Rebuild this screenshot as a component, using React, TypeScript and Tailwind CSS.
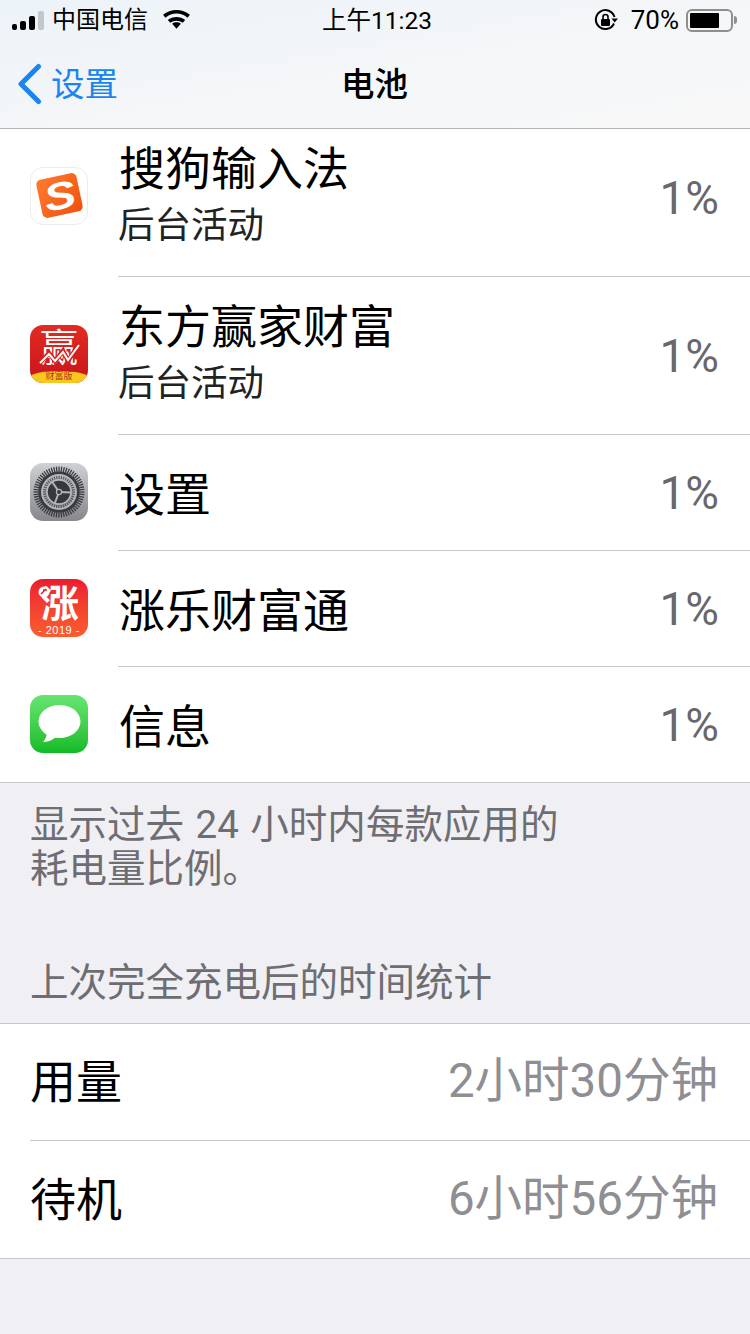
import React from "react";

const cjk = "font-['Roboto','Noto_Sans_CJK_SC',sans-serif]";

const SogouIcon = () => (
  <div className="w-[58px] h-[58px] rounded-[13px] bg-white border border-[#ececec] flex items-center justify-center">
    <div className="w-[41px] h-[39px] rounded-[5px] -rotate-[12deg] bg-gradient-to-br from-[#ff7a2c] to-[#f0500f] flex items-center justify-center">
      <span className="text-white text-[38px] leading-none font-black italic font-['Liberation_Sans',sans-serif] scale-x-125">S</span>
    </div>
  </div>
);

const EastMoneyIcon = () => (
  <div className="w-[58px] h-[58px] rounded-[13px] overflow-hidden bg-gradient-to-b from-[#e22a22] to-[#c8141a] flex flex-col items-center relative">
    <span className="text-white text-[38px] leading-[42px] mt-[2px]">赢</span>
    <svg viewBox="0 0 58 58" width="58" height="58" className="absolute inset-0">
      <path d="M9 39L19 28L25 36L33 26L38 36L49 19" fill="none" stroke="#d51f1f" strokeWidth="4.5" />
      <path d="M10 38L19 29L25 36L33 27L38 35L49 20" fill="none" stroke="#fff" strokeWidth="2" />
    </svg>
    <div className="absolute bottom-0 left-0 right-0 h-[12px] bg-[#f9c81e] rounded-t-[50%] flex items-center justify-center">
      <span className="text-[#b5301a] text-[9px] leading-none">财富版</span>
    </div>
  </div>
);

const SettingsIcon = () => {
  const teeth = Array.from({ length: 60 }, (_, i) => i * 6);
  const inner = Array.from({ length: 40 }, (_, i) => i * 9);
  return (
    <div className="w-[58px] h-[58px] rounded-[13px] overflow-hidden bg-gradient-to-b from-[#d0d1d4] to-[#87888c]">
      <svg viewBox="0 0 58 58" width="58" height="58">
        {teeth.map((a) => (
          <rect key={a} x="28.4" y="3.5" width="1.3" height="5" fill="#3a3b3f" transform={`rotate(${a} 29 29)`} />
        ))}
        <circle cx="29" cy="29" r="19.3" fill="none" stroke="#3a3b3f" strokeWidth="3" />
        <circle cx="29" cy="29" r="16.6" fill="none" stroke="#b4b5b8" strokeWidth="2.2" />
        {inner.map((a) => (
          <rect key={a} x="28.5" y="13" width="1.2" height="3" fill="#55565a" transform={`rotate(${a} 29 29)`} />
        ))}
        <circle cx="29" cy="29" r="12" fill="#37383c" stroke="#b4b5b8" strokeWidth="1.6" />
        <g stroke="#b4b5b8" strokeWidth="2" fill="none">
          <path d="M29 29L22 18.5" />
          <path d="M29 29L41 29.5" />
          <path d="M29 29L24.5 41" />
        </g>
        <circle cx="29" cy="29" r="2.6" fill="#37383c" stroke="#b4b5b8" strokeWidth="1.2" />
      </svg>
    </div>
  );
};

const ZhangleIcon = () => (
  <div className="w-[58px] h-[58px] rounded-[13px] overflow-hidden bg-gradient-to-b from-[#ec1a30] to-[#fb5c30] flex flex-col items-center relative">
    <span className="text-white text-[38px] leading-[40px] font-bold mt-[5px] ml-[2px]">涨</span>
    <span className="text-white text-[11px] leading-none font-['Liberation_Sans',sans-serif] mt-[1px] tracking-[0.5px]">- 2019 -</span>
    <svg viewBox="0 0 58 58" width="58" height="58" className="absolute inset-0">
      <circle cx="14" cy="13" r="5.5" fill="#fff" />
      <path d="M11 15L16 10M13 11H17" stroke="#e8202f" strokeWidth="1.5" fill="none" />
    </svg>
  </div>
);

const MessagesIcon = () => (
  <div className="w-[58px] h-[58px] rounded-[13px] overflow-hidden bg-gradient-to-b from-[#66e571] to-[#0cbb25]">
    <svg viewBox="0 0 58 58" width="58" height="58">
      <ellipse cx="29.5" cy="26.5" rx="21" ry="16.5" fill="#fff" />
      <path d="M17 36C17 41 15 45 13 47C19 47 24 44 27 41Z" fill="#fff" />
    </svg>
  </div>
);

const apps = [
  { icon: <SogouIcon />, name: "搜狗输入法", sub: "后台活动", h: "h-[158px] -mt-[10px]", iconPad: "pb-[5px]" },
  { icon: <EastMoneyIcon />, name: "东方赢家财富", sub: "后台活动", h: "h-[158px]", iconPad: "pb-[5px]" },
  { icon: <SettingsIcon />, name: "设置", h: "h-[116px]", iconPad: "pb-[3px]" },
  { icon: <ZhangleIcon />, name: "涨乐财富通", h: "h-[116px]", iconPad: "pb-[3px]" },
  { icon: <MessagesIcon />, name: "信息", h: "h-[115px]", iconPad: "pb-[1px]" },
];

const StatusBar = () => (
  <div className="h-[40px] relative flex items-center justify-between pl-[12px] pr-[11px] text-black">
    <div className="flex items-center">
      <div className="flex items-end gap-[3px] h-[19px]">
        <div className="w-[5px] h-[6px] bg-black rounded-[2px]" />
        <div className="w-[6px] h-[9px] bg-black rounded-[2px]" />
        <div className="w-[6px] h-[14px] bg-black rounded-[2px]" />
        <div className="w-[6px] h-[19px] bg-[#c4c8cc] rounded-[2px]" />
      </div>
      <span className="text-[24px] leading-none ml-[8px]">中国电信</span>
      <svg viewBox="0 0 28 20" width="29" height="21" className="ml-[14px] mb-[2px]">
        <path d="M14 19L9.8 14.2C12.2 12.3 15.8 12.3 18.2 14.2Z" fill="#000" />
        <path d="M1 5.5C8.3 -0.6 19.7 -0.6 27 5.5L24.6 8.2C18.4 3 9.6 3 3.4 8.2Z" fill="#000" />
        <path d="M5.6 10.6C10.4 6.5 17.6 6.5 22.4 10.6L20 13.2C16.6 10.4 11.4 10.4 8 13.2Z" fill="#000" />
      </svg>
    </div>
    <span className="absolute left-[322px] top-[8px] text-[24.5px] leading-[26px]">上午11:23</span>
    <div className="flex items-center">
      <svg viewBox="0 0 24 24" width="24" height="24" className="mr-[13px]">
        <path d="M20 15.5A9.5 9.5 0 1 1 20.5 9" fill="none" stroke="#000" strokeWidth="2" />
        <path d="M17.5 10.5L24 10.5L20.7 14.5Z" fill="#000" />
        <rect x="7" y="11" width="9" height="7" rx="1" fill="#000" />
        <path d="M9 11V9a2.5 2.5 0 0 1 5 0v2" fill="none" stroke="#000" strokeWidth="1.6" />
      </svg>
      <span className="text-[26px] leading-none">70%</span>
      <div className="w-[47px] h-[23px] ml-[7px] border-2 border-[#8e8e8e] rounded-[6px] p-[2px] flex">
        <div className="w-[29px] bg-black rounded-[1px]" />
      </div>
      <div className="w-[3px] h-[8px] ml-[1px] mr-[2px] bg-[#8e8e8e] rounded-r-[3px]" />
    </div>
  </div>
);

const NavBar = () => (
  <div className="h-[89px] relative flex items-center justify-center border-b border-[#b4b4b6]">
    <div className="absolute left-[16px] top-[23px] flex items-center">
      <svg viewBox="0 0 26 42" width="26" height="42">
        <path d="M22.5 3.5L5 21L22.5 38.5" fill="none" stroke="#1a84f0" strokeWidth="5" strokeLinecap="round" strokeLinejoin="round" />
      </svg>
      <span className="text-[#1a84f0] text-[33.5px] leading-none ml-[9px] mt-[2px]">设置</span>
    </div>
    <span className="text-[33.5px] leading-none font-medium text-black mt-[2px] mr-[1px]">电池</span>
  </div>
);

export default function App() {
  return (
    <div className={`w-[750px] h-[1334px] overflow-hidden bg-[#efeff4] ${cjk}`}>
      <div className="relative z-10 bg-gradient-to-br from-[#ecf3f9] via-[#f4f6f8] to-[#f8f8f8]">
        <StatusBar />
        <NavBar />
      </div>

      <div className="bg-white border-b border-[#c8c8cc]">
        {apps.map((app, i) => (
          <div key={app.name} className={`flex items-stretch ${app.h}`}>
            <div className={`w-[118px] pl-[30px] flex items-center shrink-0 ${app.iconPad}`}>{app.icon}</div>
            <div className={`flex-1 flex items-center justify-between pr-[31px] ${i < apps.length - 1 ? "border-b border-[#c8c7cc]" : ""}`}>
              <div className={`flex flex-col ${app.sub ? "pb-[4px]" : "pt-[4px]"}`}>
                <span className="text-[46px] leading-[60px] text-black ml-[1px]">{app.name}</span>
                {app.sub && <span className="text-[36.5px] leading-[54px] text-[#222]">{app.sub}</span>}
              </div>
              <span className="text-[46px] leading-none text-[#68686c]">1%</span>
            </div>
          </div>
        ))}
      </div>

      <div className="pl-[30px] pt-[20px] text-[38.5px] leading-[44px] text-[#6d6d72] [word-spacing:2px]">
        <p>显示过去 24 小时内每款应用的</p>
        <p>耗电量比例。</p>
      </div>

      <div className="pl-[30px] mt-[67px] h-[65px] text-[38.5px] leading-[50px] text-[#6d6d72]">上次完全充电后的时间统计</div>

      <div className="bg-white border-y border-[#c8c8cc]">
        <div className="h-[117px] pl-[30px]">
          <div className="h-full flex items-center justify-between pr-[32px] border-b border-[#c8c7cc]">
            <span className="text-[46px] leading-none text-black">用量</span>
            <span className="text-[47.5px] leading-none text-[#8e8e93]">2小时30分钟</span>
          </div>
        </div>
        <div className="h-[117px] pl-[30px] flex items-center justify-between pr-[32px]">
          <span className="text-[46px] leading-none text-black">待机</span>
          <span className="text-[47.5px] leading-none text-[#8e8e93]">6小时56分钟</span>
        </div>
      </div>
    </div>
  );
}
